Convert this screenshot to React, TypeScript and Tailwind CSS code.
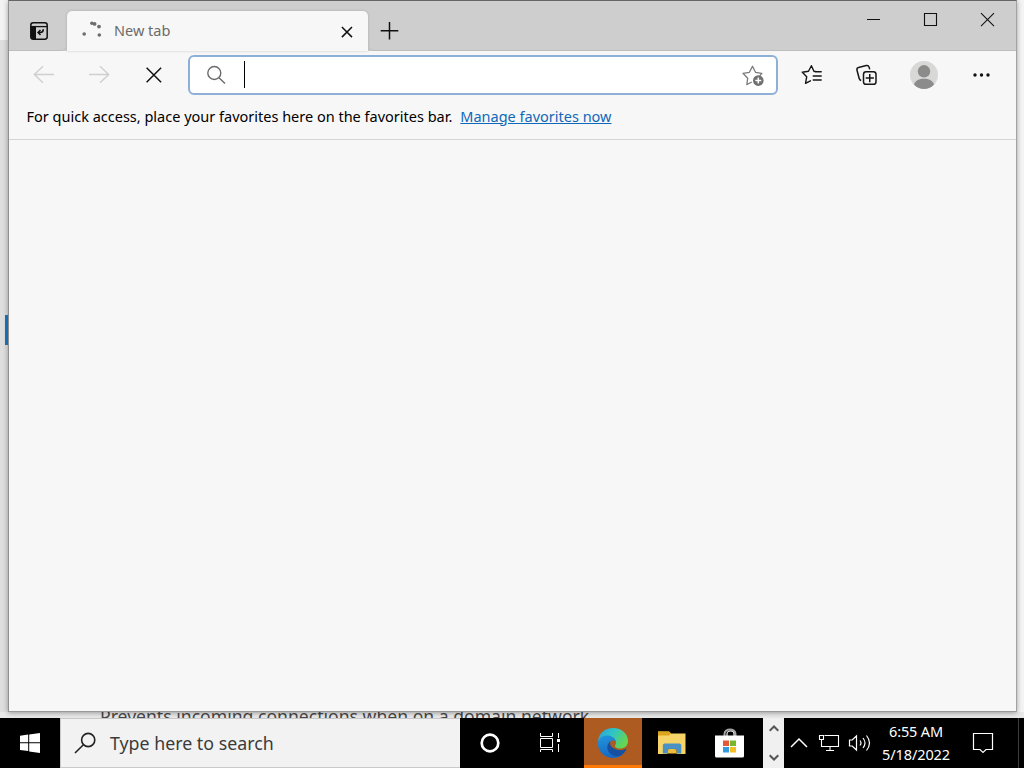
import React from "react";

const ui = "font-['Noto_Sans','Open_Sans',sans-serif]";

function VerticalTabsIcon() {
  return (
    <svg width="20" height="20" viewBox="0 0 20 20" fill="none">
      <rect x="1.8" y="1.8" width="16.4" height="16.4" rx="2.4" stroke="#111" strokeWidth="1.5" />
      <path d="M2 6h5v12H4a2 2 0 0 1-2-2z" fill="#111" />
      <path d="M2 5.6h16" stroke="#111" strokeWidth="1.3" />
      <path d="M14.3 8.3c0 2.200-1 3.200-3 3.200H9.400M11.500 8.900L9 11.500l2.500 2.600" stroke="#111" strokeWidth="1.5" />
    </svg>
  );
}

function TitleBar() {
  return (
    <div className="flex h-[50px] shrink-0 bg-[#cecece]">
      <div className="flex w-[58px] items-center justify-center rounded-br-[6px] border-b border-[#bebebe] pt-[11px] pl-[2px]">
        <VerticalTabsIcon />
      </div>
      <div className="mt-[10px] flex h-10 w-[301px] items-center rounded-t-[5px] bg-[#f7f7f7] shadow-[0_0_3px_rgba(0,0,0,0.18)]">
        <svg className="ml-[14px]" width="22" height="20" viewBox="0 0 22 20" fill="#6c6c6c">
          <circle cx="3.2" cy="13" r="1.8" />
          <circle cx="10.9" cy="2.2" r="1.8" />
          <circle cx="13.600" cy="2.900" r="1.900" />
          <circle cx="18" cy="5.6" r="1.900" />
          <circle cx="18.3" cy="14" r="1.8" />
        </svg>
        <span className="-mt-[2px] ml-[11px] w-[220px] text-[14.5px] leading-5 text-[#6b6b6b]">New tab</span>
        <svg width="20" height="20" viewBox="0 0 20 20" stroke="#111" strokeWidth="1.5">
          <path d="M7.9 6L18 16.1M18 6L7.9 16.1" />
        </svg>
      </div>
      <div className="flex flex-1 rounded-bl-[6px] border-b border-[#bebebe]">
        <svg className="mt-5 ml-[12px]" width="20" height="20" viewBox="0 0 20 20" stroke="#111" strokeWidth="1.5">
          <path d="M.7 9.700h17.600M9.500 1v17.400" />
        </svg>
        <div className="ml-auto flex pt-[8px]">
          <div className="flex w-[57px] justify-center">
            <svg width="20" height="20" viewBox="0 0 20 20" stroke="#111"><path d="M3 10.500h13" /></svg>
          </div>
          <div className="flex w-[57px] justify-center">
            <svg width="20" height="20" viewBox="0 0 20 20" stroke="#111" strokeWidth="1.100" fill="none"><path d="M3.500 4.500h12v12H3.500z" /></svg>
          </div>
          <div className="flex w-[57px] justify-center">
            <svg width="20" height="20" viewBox="0 0 20 20" stroke="#111" strokeWidth="1.1"><path d="M3 4.200L16 17.200M16 4.200L3 17.200" /></svg>
          </div>
        </div>
      </div>
    </div>
  );
}

function Cell({ children }: { children: React.ReactNode }) {
  return <div className="flex w-[55px] shrink-0 items-center justify-center">{children}</div>;
}

function Toolbar() {
  return (
    <div className="flex h-12 shrink-0 pl-[7px]">
      <Cell>
        <svg width="24" height="24" viewBox="0 0 24 24" fill="none" stroke="#cfcfcf" strokeWidth="1.4"><path d="M22 11.500H2M11 3.200L2.300 11.500l8.700 8.300" /></svg>
      </Cell>
      <Cell>
        <svg width="24" height="24" viewBox="0 0 24 24" fill="none" stroke="#cfcfcf" strokeWidth="1.4"><path d="M2 11.500h20M13 3.200l8.700 8.300L13 19.800" /></svg>
      </Cell>
      <Cell>
        <svg width="20" height="20" viewBox="0 0 20 20" stroke="#111" strokeWidth="1.5"><path d="M2.600 2.800L17.100 17.300M17.100 2.800L2.600 17.300" /></svg>
      </Cell>
      <div className="mt-1 ml-[7px] flex h-10 w-[590px] shrink-0 items-center rounded-[6px] border-2 border-[#8eafd6] bg-white">
        <svg className="ml-[16px]" width="20" height="20" viewBox="0 0 20 20" fill="none" stroke="#6b6b6b" strokeWidth="1.4">
          <circle cx="8.300" cy="8" r="6.500" /><path d="M13 12.700l6 5.900" />
        </svg>
        <span className="-mt-[2px] ml-[18px] h-[27px] w-px bg-black" />
        <svg className="ml-auto mr-[11px]" width="24" height="24" viewBox="0 0 24 24" fill="none">
          <path d="M7.300 20.800l-1.500.8.900-6.300L2 10.300l6.400-1L11.500 3.300l3 6 6.400 1-2 2.300M7.300 20.800l3-1.600" stroke="#7b7b7b" strokeWidth="1.3" strokeLinejoin="round" strokeLinecap="round" />
          <circle cx="17.300" cy="17.600" r="5.300" fill="#6f6f6f" />
          <path d="M14.300 17.600h6M17.300 14.600v6" stroke="#fff" strokeWidth="1.5" />
        </svg>
      </div>
      <div className="ml-[6px] flex">
        <Cell>
          <svg width="24" height="24" viewBox="0 0 24 24" fill="none" stroke="#161616" strokeWidth="1.4" strokeLinejoin="round" strokeLinecap="round">
            <path d="M16.500 8.800L13.900 8.300 11.400 2.700 8.500 8.300 2.300 9.300l4.400 4.500-1.200 6.600 4.900-2.600M15.200 8.700h6M13.200 13h8M13.200 17h8" />
          </svg>
        </Cell>
        <Cell>
          <svg width="24" height="24" viewBox="0 0 24 24" fill="none" stroke="#161616" strokeWidth="1.500" strokeLinejoin="round">
            <rect x="8.500" y="8.800" width="12.500" height="12.500" rx="2.600" />
            <path d="M14.750 11v8.200M10.700 15h8.200M6.200 17.500c-1-.2-1.700-.9-2-2L2 7.300c-.3-1.300.2-2.500 1.600-2.900l7.600-1.900c1.300-.3 2.500.3 2.900 1.600l.6 2.300" />
          </svg>
        </Cell>
        <div className="ml-px flex w-[58px] items-center justify-center">
          <svg width="28" height="28" viewBox="0 0 28 28">
            <circle cx="14" cy="14" r="14" fill="#d8d8d6" />
            <circle cx="14" cy="10.300" r="6.200" fill="#8b8b8b" />
            <path d="M4 23.500c1.400-4 5.200-5.700 10-5.700s8.600 1.700 10 5.700C21.500 26.300 18 28 14 28S6.500 26.300 4 23.500z" fill="#8b8b8b" />
          </svg>
        </div>
        <Cell>
          <svg width="20" height="20" viewBox="0 0 20 20" fill="#111"><circle cx="4" cy="10" r="1.700" /><circle cx="10.500" cy="10" r="1.700" /><circle cx="17" cy="10" r="1.700" /></svg>
        </Cell>
      </div>
    </div>
  );
}

function EdgeIcon() {
  return (
    <svg width="32" height="32" viewBox="0 0 32 32">
      <defs>
        <linearGradient id="edgeTop" x1="0" y1="0" x2="1" y2="0.500">
          <stop offset="0" stopColor="#2a9ddd" /><stop offset="0.500" stopColor="#2fc5c5" /><stop offset="1" stopColor="#65d651" />
        </linearGradient>
        <linearGradient id="edgeLow" x1="0" y1="0" x2="0.300" y2="1">
          <stop offset="0" stopColor="#2296dc" /><stop offset="1" stopColor="#1769c5" />
        </linearGradient>
      </defs>
      <path d="M1 15C1.500 6 8 1 16 1c9 0 15 6 15 13 0 5-3.500 7.500-8 7.500-3.500 0-6-1.300-4.800-3.300 1.500-2.600.8-5-1.700-6.500C11 8.500 4 10 1 15z" fill="url(#edgeTop)" />
      <path d="M1 16c.5-4.500 4-7.500 9-7.500 4.800 0 8.200 2.500 8.800 5.800-1.200-1-3-1.200-4.800-.2-4 3-2.500 8.900 2 11.400 3.500 2 7 2.500 10 1.300C22.500 30.500 18 31.500 13.500 30.800 6 29.500.3 23 1 16z" fill="url(#edgeLow)" />
      <path d="M13.300 14.500c-3.800 3-3.800 8.100-.6 11.500 4 4.300 9.600 3.900 12.300 1.700 2-1.500 3.500-3.200 4.300-5 .3-.8-.3-1.200-1-.8-4 2-8.300 1.600-11.300-.6-2.600-2-4.200-3.900-3.700-6.800z" fill="#1551a0" />
      <path d="M13.300 16.200c.4-2.200 2.500-3.200 4.300-2 1.300.9 1.300 2.600.4 3.900-1 1.700.6 3.300 3.600 3.500-3.600 1.100-8.800-1.500-8.300-5.400z" fill="#ad5b20" />
    </svg>
  );
}

function Taskbar() {
  return (
    <div className="flex h-[50px] shrink-0 bg-black">
      <div className="flex w-[60px] items-center justify-center">
        <svg width="20" height="20" viewBox="0 0 20 20" fill="#fff"><path d="M0 2.800l8.200-1.200v7.700H0zM9.200 1.400L20 0v9.300H9.200zM0 10.300h8.200V18L0 17zM9.200 10.300H20V20L9.200 18.400z" /></svg>
      </div>
      <div className="flex w-[400px] items-center border border-r-0 border-[#c9c9c9] bg-[#f2f2f2]">
        <svg className="ml-[13px]" width="23" height="22" viewBox="0 0 23 22" fill="none" stroke="#222" strokeWidth="1.600"><circle cx="14.200" cy="8" r="6.600" /><path d="M9.400 12.800L1 21" /></svg>
        <span className="ml-[13px] text-[17.800px] leading-6 whitespace-nowrap text-[#3b3b3b]">Type here to search</span>
      </div>
      <div className="flex w-[60px] items-center justify-center">
        <svg width="20" height="20" viewBox="0 0 20 20" fill="none" stroke="#fff" strokeWidth="2.700"><circle cx="10" cy="10" r="8.300" /></svg>
      </div>
      <div className="flex w-16 items-center pl-5">
        <svg width="21" height="20" viewBox="0 0 21 20" fill="none" stroke="#fff"><path d="M.5 0v3.500h12V0M.5 5.500h12v9H.5zM.5 19v-2.500h12V19M18.500 0v5M18.500 11v8" /><path d="M17 6h3v3h-3z" fill="#fff" stroke="none" /></svg>
      </div>
      <div className="flex w-[58px] items-center justify-center border-b-[3px] border-[#ff7a05] bg-[#ad5b20] pt-[2px]">
        <EdgeIcon />
      </div>
      <div className="flex w-[58px] items-center justify-center pl-[2px]">
        <svg width="28" height="24" viewBox="0 0 28 24">
          <path d="M0 .5h11l2 2h14.500v20.500H0z" fill="#f6d468" />
          <path d="M0 .5h11l2 2-2 2H0z" fill="#dca51a" />
          <path d="M4.800 22.500v-8q0-2 2-2h14.500q2 0 2 2v8h-4.800v-2.500q0-2-2-2h-5q-2 0-2 2v2.500z" fill="#4a91c4" />
          <path d="M9.500 24v-4q0-2 2-2h5q2 0 2 2v4z" fill="#000" />
          <path d="M9.500 22.500v-2.500q0-2 2-2h5q2 0 2 2v2.500z" fill="#f1bd3c" />
        </svg>
      </div>
      <div className="flex w-[63px] items-center pl-[15px]">
        <svg width="30" height="30" viewBox="0 0 30 30" fill="none">
          <path d="M9.500 9V6c0-6 11-6 11 0v3" stroke="#a4a4a4" strokeWidth="2" />
          <path d="M12 9V6c0-4 7-4 7 0v3" stroke="#eee" strokeWidth="1.200" />
          <path d="M0 7.500h29V28q0 1.500-1.500 1.500h-26Q0 29.500 0 28z" fill="#fff" />
          <path d="M8 12.500h6v5.500H8z" fill="#e7563a" /><path d="M15 12.500h6v5.500h-6z" fill="#77b82a" /><path d="M8 19h6v5.500H8z" fill="#329ce0" /><path d="M15 19h6v5.500h-6z" fill="#f5be23" />
        </svg>
      </div>
      <div className="flex w-[21px] flex-col items-center justify-between bg-[#f0f0f0] pt-[7px] pb-[7px]">
        <svg width="10" height="7" viewBox="0 0 10 7" fill="none" stroke="#555" strokeWidth="2"><path d="M.7 5.800L5 1.500l4.300 4.300" /></svg>
        <svg width="10" height="7" viewBox="0 0 10 7" fill="none" stroke="#555" strokeWidth="2"><path d="M.7 1.200L5 5.500l4.300-4.300" /></svg>
      </div>
      <div className="flex flex-1 items-center">
        <svg className="ml-[6px] shrink-0" width="18" height="20" viewBox="0 0 18 20" fill="none" stroke="#fff" strokeWidth="1.500"><path d="M1 14l8-8 8 8" /></svg>
        <svg className="ml-[10px] shrink-0" width="22" height="20" viewBox="0 0 22 20" fill="none" stroke="#fff" strokeWidth="1.100"><path d="M6.500 2.500h14v11h-17V7M12 13.500v4M8 17.500h8M1.500 2.500h4v4h-4z" /></svg>
        <svg className="ml-[8px] shrink-0" width="24" height="20" viewBox="0 0 24 20" fill="none" stroke="#fff" strokeWidth="1.200"><path d="M1.500 7H4.200L8.500 3v14L4.200 13H1.500zM12 7.500q2 2.500 0 5M15 5q4 5 0 10M18.500 2.500q6 7.500 0 15" /></svg>
        <div className="ml-[6px] flex w-[76px] shrink-0 flex-col items-center text-[14.500px] leading-[23px] whitespace-nowrap text-white">
          <span className="tracking-[-0.150px]">6:55 AM</span>
          <span className="tracking-[-0.100px]">5/18/2022</span>
        </div>
        <svg className="ml-[18px] shrink-0" width="22" height="22" viewBox="0 0 22 22" fill="none" stroke="#fff" strokeWidth="1.200"><path d="M1.500 1.500h19v16H14l-3 3-3-3H1.500z" /></svg>
        <span className="ml-auto mr-[5px] h-full w-px bg-[#3c3c3c]" />
      </div>
    </div>
  );
}

export default function App() {
  return (
    <div className={`${ui} flex h-[768px] w-[1024px] flex-col overflow-hidden bg-[#e8e8e8]`}>
      <div className="flex h-[712px] shrink-0">
        <div className="flex w-2 flex-col bg-[#dedede]">
          <div className="h-10 bg-[#f3f3f3]" />
          <div className="relative z-10 mt-[275px] ml-auto h-[30px] w-[3px] bg-[#176fb3]" />
        </div>
        <main className="relative flex w-[1009px] flex-col border border-t-[#666] border-r-[#a2a2a2] border-b-[#999] border-l-[#909090] bg-[#f7f7f7] shadow-[0_1px_5px_rgba(0,0,0,0.35)]">
          <TitleBar />
          <Toolbar />
          <div className="flex h-[41px] shrink-0 items-center border-b border-[#d5d5d5] pb-[7px] pl-[17.500px] text-[14.500px] leading-5 whitespace-nowrap text-black">
            <span>For quick access, place your favorites here on the favorites bar.</span>
            <a className="ml-2 text-[#1068b8] underline underline-offset-1">Manage favorites now</a>
          </div>
        </main>
        <div className="flex-1 bg-[#f4f4f4]" />
      </div>
      <div className="flex h-[6px] shrink-0 overflow-hidden bg-[#e9e9e9]">
        <span className="-mt-[8px] ml-[100px] text-[17.600px] leading-[24px] whitespace-nowrap text-[#484848]">Prevents incoming connections when on a domain network.</span>
      </div>
      <Taskbar />
    </div>
  );
}
